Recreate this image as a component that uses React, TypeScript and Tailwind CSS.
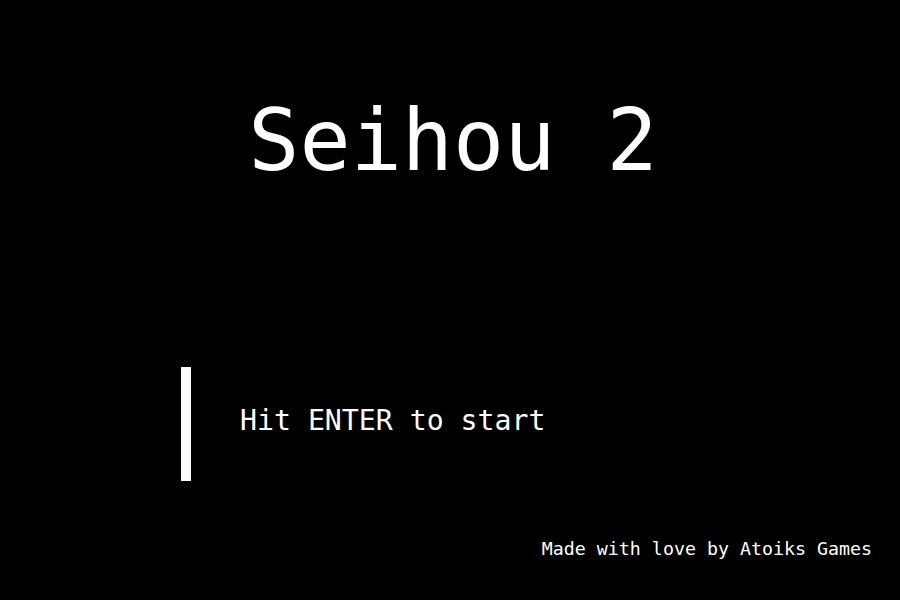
export default function App() {
  return (
    <div className="flex h-[600px] w-[900px] flex-col overflow-hidden bg-black text-white font-['DejaVu_Sans_Mono',monospace]">
      <h1 className="pt-[98px] pl-[6px] text-center text-[85px] leading-none font-normal">Seihou 2</h1>

      <div className="mt-[184px] flex items-start pl-[181px]">
        <div className="h-[114px] w-[10px] bg-white"></div>
        <div className="ml-[49px] mt-[40px] text-[28.2px] leading-none">Hit ENTER to start</div>
      </div>

      <div className="mt-[59px] pr-[28px] text-right text-[18.3px] leading-none">
        Made with love by Atoiks Games
      </div>
    </div>
  );
}
